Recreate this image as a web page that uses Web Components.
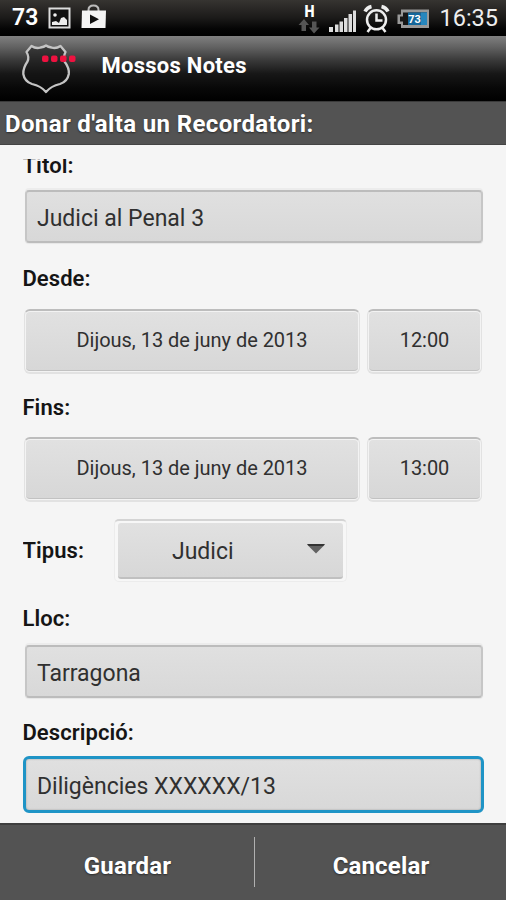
<!DOCTYPE html>
<html lang="ca">
<head>
<meta charset="utf-8">
<title>Mossos Notes</title>
<style>
  body {
    margin: 0;
    font-family: Roboto, "Liberation Sans", sans-serif;
    background: #f5f5f5;
  }
</style>
</head>
<body>
<notes-app></notes-app>

<script>
class StatusBar extends HTMLElement {
  constructor() {
    super();
    this.attachShadow({ mode: 'open' });
    this.shadowRoot.innerHTML = `
      <style>
        :host {
          display: flex;
          align-items: center;
          justify-content: space-between;
          box-sizing: border-box;
          height: 36px;
          padding: 0 8px 0 12px;
          color: #fff;
          background: linear-gradient(#363431, #1b1a19 50%, #050505 80%, #000);
        }
        svg { display: block; }
        .temp { width: 26px; margin-right: 10px; font-size: 23px; font-weight: 600; line-height: 38px; }
        .clock { margin-left: 10px; font-size: 23.5px; line-height: 38px; color: #eee; white-space: nowrap; }
        div { display: flex; align-items: center; height: 36px; }
      </style>
      <div>
        <span class="temp">73</span>
        <svg width="62" height="36" viewBox="48 0 62 36">
          <rect x="49.5" y="8.5" width="20" height="19" fill="#111" stroke="#ddd" stroke-width="2"/>
          <path d="M52 25v-3l4-1 3 2 2-5 3-1 3 3v5z" fill="#eee"/>
          <circle cx="55" cy="15" r="1.8" fill="#eee"/>
          <path d="M88.500 12V10q0-4.500 5-4.500t5 4.500v2" fill="none" stroke="#bbb" stroke-width="2"/>
          <path d="M82 10.500h24l-.5 17.500H81.500z" fill="#f4f4f4"/>
          <path d="M90 14.500v9.500l9-4.800z" fill="#111"/>
        </svg>
      </div>
      <div>
        <svg width="132" height="36" viewBox="298 0 132 36">
          <text x="310.500" y="16.500" text-anchor="middle" font-size="17" font-weight="900" fill="#fff" font-family="Roboto, sans-serif" textLength="10" lengthAdjust="spacingAndGlyphs">H</text>
          <path d="M299.500 25l5.500-6 5 6h-3v6h-4.500v-6zM310 27.500l5 6 5.500-6h-3v-6h-4.500v6z" fill="#555"/>
          <g fill="#ddd">
            <rect x="330" y="27" width="4" height="5"/>
            <rect x="336" y="24.500" width="3.500" height="7.500"/>
            <rect x="340.500" y="21.500" width="3.500" height="10.500"/>
            <rect x="345" y="18" width="3.500" height="14"/>
            <rect x="349.500" y="14" width="3.500" height="18"/>
            <rect x="354" y="10.500" width="3" height="21.500"/>
          </g>
          <g fill="none" stroke="#eee" stroke-width="2.500">
            <circle cx="377.500" cy="19.800" r="9.500"/>
            <path d="M377.500 13.500v7h6"/>
            <path d="M371.500 28l-3 4M383.500 28l3 4"/>
            <path d="M366 11.500q2-4 6.500-5M389 11.500q-2-4-6.500-5" stroke-width="3.500"/>
          </g>
          <path d="M402 9.500h28.500v18.500H402v-4h-3.500v-9.500h3.500z" fill="#999"/>
          <path d="M404 12.500h24V25h-24v-3.500h-3v-5h3z" fill="#181818"/>
          <path d="M409 12.500h19V25h-19z" fill="#15679a"/>
          <path d="M422 12.500h6V25h-6z" fill="#2787be"/>
          <text x="415.500" y="23" text-anchor="middle" font-size="11" font-weight="700" fill="#fff" font-family="Roboto, sans-serif">73</text>
        </svg>
        <span class="clock">16:35</span>
      </div>
    `;
  }
}
customElements.define('status-bar', StatusBar);

class AppHeader extends HTMLElement {
  constructor() {
    super();
    this.attachShadow({ mode: 'open' });
    this.shadowRoot.innerHTML = `
      <style>
        :host {
          display: flex;
          box-sizing: border-box;
          height: 65px;
          padding-left: 20px;
          color: #fff;
          background: linear-gradient(#808080, #606060 18%, #383838 38%, #171717 58%, #080808 80%, #000);
        }
        svg { display: block; flex: none; }
        span { margin: 16px 0 0 23.5px; font-size: 22px; font-weight: 700; line-height: 28px; letter-spacing: .27px; }
      </style>
      <svg width="58" height="65" viewBox="20 36 58 65">
        <path d="M31.500 46Q36 49 40.500 47.500Q44 47 46 45.500Q48 47 51.500 47.500Q56 49 60.500 46L65.500 52Q63 57 64.500 61.500Q69.500 68 68.800 74Q67.500 81.500 60 84Q51 86 46 92Q41 86 32 84Q24.500 81.500 23.300 74Q23 68 27.500 61.500Q29.500 57 26.500 52Z" fill="#111" fill-opacity=".5" stroke="#c4c4c4" stroke-width="2.300" stroke-linejoin="round"/>
        <g fill="#ee1240">
          <rect x="42" y="55.500" width="6.500" height="6.500" rx="2"/>
          <rect x="51" y="55.500" width="6.500" height="6.500" rx="2"/>
          <rect x="60" y="55.500" width="6.500" height="6.500" rx="2"/>
          <rect x="69" y="55.500" width="6.500" height="6.500" rx="2"/>
        </g>
      </svg>
      <span><slot></slot></span>
    `;
  }
}
customElements.define('app-header', AppHeader);

class SectionTitle extends HTMLElement {
  constructor() {
    super();
    this.attachShadow({ mode: 'open' });
    this.shadowRoot.innerHTML = `
      <style>
        :host {
          display: block;
          box-sizing: border-box;
          height: 44px;
          padding: 0 5px;
          border-top: 1px solid #3a3a3a;
          border-bottom: 1px solid #444;
          color: #fff;
          background: #535353;
          font-size: 24px;
          font-weight: 700;
          line-height: 45px;
          letter-spacing: .36px;
          white-space: nowrap;
          text-shadow: 0 1px 2px rgba(0, 0, 0, .5);
        }
      </style>
      <slot></slot>
    `;
  }
}
customElements.define('section-title', SectionTitle);

class FieldLabel extends HTMLElement {
  constructor() {
    super();
    this.attachShadow({ mode: 'open' });
    this.shadowRoot.innerHTML = `
      <style>
        :host {
          display: block;
          height: 26px;
          color: #151515;
          font-size: 22px;
          font-weight: 600;
          line-height: 26px;
          letter-spacing: .08px;
          text-indent: -.6px;
          white-space: nowrap;
        }
      </style>
      <slot></slot>
    `;
  }
}
customElements.define('field-label', FieldLabel);

class TextField extends HTMLElement {
  constructor() {
    super();
    this.attachShadow({ mode: 'open' });
    this.shadowRoot.innerHTML = `
      <style>
        :host {
          display: block;
          box-sizing: border-box;
          height: 53px;
          margin: 0 1px 0 2px;
          padding: 0 10px;
          border: 2px solid #bcbcbc;
          border-left-color: #c6c6c6;
          border-right-color: #c6c6c6;
          border-radius: 4px;
          color: #303030;
          background: linear-gradient(#e0e0e0, #d8d8d8);
          box-shadow: 0 -2px 0 #ececec, 0 1px 1px #e6e6e6;
          font-size: 23px;
          line-height: 54px;
          white-space: nowrap;
        }
        :host([focused]) {
          height: 57px;
          margin: 0;
          padding: 0 11px;
          border: 3px solid #1f94c6;
          border-radius: 6px;
          box-shadow: inset 0 0 2px #999;
          line-height: 55px;
        }
      </style>
      <slot></slot>
    `;
  }
}
customElements.define('text-field', TextField);

class PickerButton extends HTMLElement {
  constructor() {
    super();
    this.attachShadow({ mode: 'open' });
    this.shadowRoot.innerHTML = `
      <style>
        :host {
          display: block;
          box-sizing: border-box;
          height: 65px;
          border: 1px solid #e2e2e2;
          border-top: 2px solid #bdbdbd;
          border-bottom-width: 2px;
          border-radius: 6px;
          padding: 1px 1px 2px;
          color: #303030;
          background: #f3f3f3;
          font-size: 20px;
          text-align: center;
          letter-spacing: -.03px;
          white-space: nowrap;
        }
        .face {
          box-sizing: border-box;
          height: 59px;
          border-radius: 4px;
          border-bottom: 1px solid #c2c2c2;
          line-height: 56px;
          background: linear-gradient(#e1e1e1, #d7d7d7);
        }
      </style>
      <div class="face"><slot></slot></div>
    `;
  }
}
customElements.define('picker-button', PickerButton);

class TypeSpinner extends HTMLElement {
  constructor() {
    super();
    this.attachShadow({ mode: 'open' });
    this.shadowRoot.innerHTML = `
      <style>
        :host {
          display: block;
          box-sizing: border-box;
          width: 233px;
          height: 63px;
          padding: 2px 3px;
          border: 1px solid #ececec;
          border-top: 2px solid #d4d4d4;
          border-radius: 5px;
          background: #f7f7f7;
        }
        .face {
          display: flex;
          align-items: center;
          justify-content: space-between;
          box-sizing: border-box;
          height: 56px;
          padding: 2px 18px 0 54px;
          border-radius: 3px;
          border-bottom: 2px solid #c0c0c0;
          color: #303030;
          background: linear-gradient(#e1e1e1, #d7d7d7);
          font-size: 23px;
        }
        svg { margin-bottom: 4px; }
      </style>
      <div class="face">
        <slot></slot>
        <svg width="18" height="10" viewBox="0 0 18 10"><path d="M0 .500h18L9 9.500z" fill="#626262"/><path d="M0 0h18l-2 2H2z" fill="#333"/></svg>
      </div>
    `;
  }
}
customElements.define('type-spinner', TypeSpinner);

class ActionBar extends HTMLElement {
  constructor() {
    super();
    this.attachShadow({ mode: 'open' });
    this.shadowRoot.innerHTML = `
      <style>
        :host {
          display: grid;
          grid-template-columns: 254px 1px 1fr;
          align-items: center;
          box-sizing: border-box;
          height: 77px;
          border-top: 2px solid #3e3e3e;
          color: #fff;
          background: #535353;
          font-size: 24px;
          font-weight: 700;
          text-align: center;
          text-shadow: 0 1px 2px rgba(0, 0, 0, .5);
        }
        i { height: 50px; margin-bottom: 2px; background: #b0b0b0; }
        span { padding: 6px 0 0 1px; letter-spacing: .15px; }
      </style>
      <span><slot name="accept"></slot></span>
      <i></i>
      <span><slot name="cancel"></slot></span>
    `;
  }
}
customElements.define('action-bar', ActionBar);

class NotesApp extends HTMLElement {
  constructor() {
    super();
    this.attachShadow({ mode: 'open' });
    this.shadowRoot.innerHTML = `
      <style>
        :host {
          display: flex;
          flex-direction: column;
          width: 506px;
          height: 900px;
          overflow: hidden;
          background: #f5f5f5;
        }
        main { flex: 1; min-height: 0; padding: 14px 22px 0 23px; }
        .scroll { height: 100%; overflow: hidden; }
        .first { margin-top: -6px; }
        .row { display: grid; grid-template-columns: 336px 115px; gap: 7px; margin: 17px 0 21px 1px; }
        .row.last { margin: 16px 0 17px 1px; }
        .type { display: flex; align-items: center; margin-bottom: 24px; }
        .type field-label { width: 91px; padding-top: 1px; }
      </style>
      <status-bar></status-bar>
      <app-header>Mossos Notes</app-header>
      <section-title>Donar d'alta un Recordatori:</section-title>
      <main>
        <div class="scroll">
          <field-label class="first">Títol:</field-label>
          <text-field style="margin-top:11px">Judici al Penal 3</text-field>
          <field-label style="margin-top:23px">Desde:</field-label>
          <div class="row">
            <picker-button>Dijous, 13 de juny de 2013</picker-button>
            <picker-button>12:00</picker-button>
          </div>
          <field-label>Fins:</field-label>
          <div class="row last">
            <picker-button>Dijous, 13 de juny de 2013</picker-button>
            <picker-button>13:00</picker-button>
          </div>
          <div class="type">
            <field-label>Tipus:</field-label>
            <type-spinner>Judici</type-spinner>
          </div>
          <field-label>Lloc:</field-label>
          <text-field style="margin-top:13px">Tarragona</text-field>
          <field-label style="margin-top:22px">Descripció:</field-label>
          <text-field focused style="margin-top:10px">Diligències XXXXXX/13</text-field>
        </div>
      </main>
      <action-bar>
        <span slot="accept">Guardar</span>
        <span slot="cancel">Cancelar</span>
      </action-bar>
    `;
  }
}
customElements.define('notes-app', NotesApp);
</script>
</body>
</html>
